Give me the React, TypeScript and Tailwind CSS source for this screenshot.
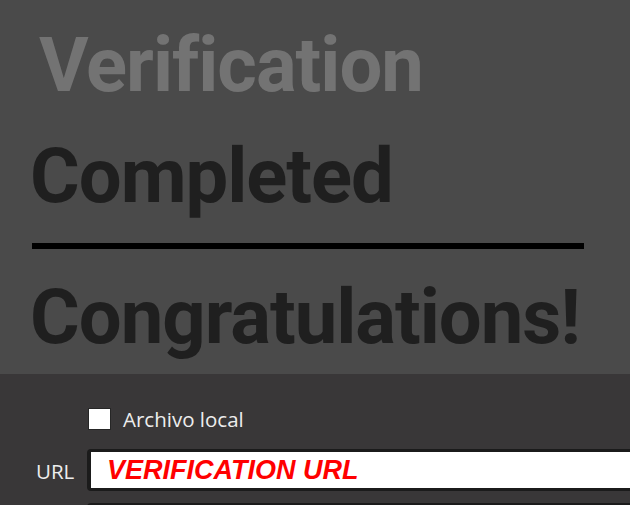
import React from "react";

export default function App() {
  const heading =
    "font-['Roboto',_'Liberation_Sans',_sans-serif] font-bold text-[76px] leading-[76px] tracking-[-1px] whitespace-nowrap";
  const ui = "font-['Open_Sans',_'Noto_Sans',_sans-serif] text-[20.5px] leading-[28px] text-[#ededed]";
  return (
    <div className="w-[630px] h-[505px] overflow-hidden bg-[#393738]">
      <div className="h-[374px] bg-[#4a4a4a] pt-[27px] flex flex-col">
        <div className={`${heading} pl-[39px] text-[#737373]`}>Verification</div>
        <div className={`${heading} mt-[35px] pl-[30px] text-[#1f1f1f]`}>Completed</div>
        <div className="mt-[29px] ml-[32px] w-[552px] h-[6px] bg-black" />
        <div className={`${heading} mt-[30px] pl-[30px] text-[#1f1f1f]`}>Congratulations!</div>
      </div>
      <div className="pt-[34px] flex flex-col">
        <div className="flex items-center h-[22px] pl-[88px] gap-[12px]">
          <div className="w-[23px] h-[22px] bg-white border border-[#262626]" />
          <span className={ui}>Archivo local</span>
        </div>
        <div className="mt-[19px] flex items-center">
          <span className={`${ui} w-[87px] shrink-0 pl-[36px] mt-[2px]`}>URL</span>
          <div className="w-[600px] shrink-0 h-[42px] bg-white border-t-[3px] border-l-[4px] border-b-[3px] border-[#1b1b1b] rounded-[4px] pl-[16px] flex items-center">
            <span className="font-['Liberation_Sans',_Arial,_sans-serif] font-bold italic text-[27px] leading-[36px] text-[#ff0000] whitespace-nowrap">
              VERIFICATION URL
            </span>
          </div>
        </div>
        <div className="mt-[12px] flex">
          <div className="ml-[87px] w-[600px] shrink-0 h-[42px] bg-white border-t-[3px] border-l-[4px] border-b-[3px] border-[#1b1b1b] rounded-[4px]" />
        </div>
      </div>
    </div>
  );
}
